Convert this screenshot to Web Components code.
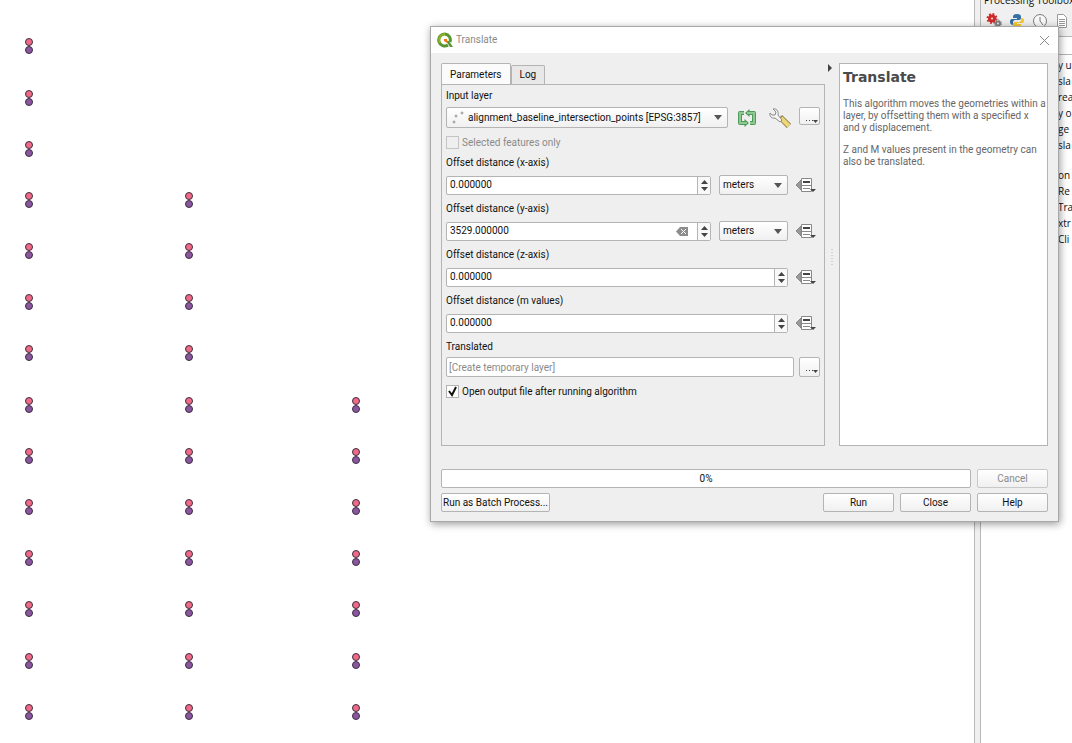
<!DOCTYPE html>
<html lang="en">
<head>
<meta charset="utf-8">
<title>QGIS</title>
<style>
  html, body { height: 100%; }
  body {
    margin: 0;
    overflow: hidden;
    background: #fff;
    color: #111;
    font: 10px/12px Roboto, "Noto Sans", sans-serif;
  }
</style>
</head>
<body>
<qg-desktop>
  <qg-map slot="map"></qg-map>
  <qg-toolbox slot="dock"></qg-toolbox>
  <qg-dialog slot="window" title-text="Translate">
    <qg-tabs slot="params">
      <qg-layer-row label="Input layer" value="alignment_baseline_intersection_points [EPSG:3857]"></qg-layer-row>
      <qg-check label="Selected features only" disabled></qg-check>
      <qg-spin label="Offset distance (x-axis)" value="0.000000" unit="meters"></qg-spin>
      <qg-spin label="Offset distance (y-axis)" value="3529.000000" unit="meters" clearable></qg-spin>
      <qg-spin label="Offset distance (z-axis)" value="0.000000"></qg-spin>
      <qg-spin label="Offset distance (m values)" value="0.000000"></qg-spin>
      <qg-output label="Translated" hint="[Create temporary layer]"></qg-output>
      <qg-check label="Open output file after running algorithm" checked></qg-check>
    </qg-tabs>
    <qg-help slot="help" heading="Translate">
      <p>This algorithm moves the geometries within a layer, by offsetting them with a specified x and y displacement.</p>
      <p>Z and M values present in the geometry can also be translated.</p>
    </qg-help>
  </qg-dialog>
</qg-desktop>

<script>
const BASE = `
  * { box-sizing: border-box; }
  button, input, select { font: inherit; color: inherit; margin: 0; }
  button, .box {
    border: 1px solid #b4b4b4;
    border-radius: 2px;
  }
  button { background: linear-gradient(#fff, #f0f0f0); padding: 0; }
  input.box { background: #fff; min-width: 0; height: 19px; padding: 0 3px; outline: 0; }
  .icon { border: 0; background: none; display: flex; }
  svg { display: block; }
`;

const COMBO_ARROW = '<svg width="8" height="5" viewBox="0 0 8 5"><path d="M0 0h8L4 5z" fill="#555"/></svg>';

const DEFINED = `
  <svg width="21" height="16" viewBox="0 0 21 16">
    <path d="M5 3v10L0 8z" fill="#999" stroke="#888"/>
    <path d="M5.500 1.500h10v13h-10z" fill="#fff" stroke="#888"/>
    <path d="M7 5h7" stroke="#444" stroke-width="2"/>
    <path d="M5 8.500h11M7 11.500h7" stroke="#888"/>
    <path d="M14 12h6l-3 3z" fill="#444"/>
  </svg>`;

const DOTS_BUTTON = `
  <button class="dots" aria-label="More options">
    <svg width="19" height="18" viewBox="0 0 19 18">
      <path d="M6 12.500h7" stroke="#444" stroke-dasharray="1 2"/>
      <path d="M13 12h5l-2.500 3z" fill="#444"/>
    </svg>
  </button>`;

class QgDesktop extends HTMLElement {
    constructor() {
        super();
        this.attachShadow({ mode: 'open' });
        this.shadowRoot.innerHTML = `
        <style>
          :host { display: grid; grid-template-columns: 1fr 7px 91px; height: 100vh; position: relative; overflow: hidden; }
          .split { background: #f0f0f0; border: solid #b8b8b8; border-width: 0 1px; }
          slot[name=window]::slotted(*) { position: absolute; left: 430px; right: 13px; top: 26px; }
        </style>
        <slot name="map"></slot>
        <div class="split"></div>
        <slot name="dock"></slot>
        <slot name="window"></slot>
        `;
    }
}

// column x, index of the first row that has points
const COLUMNS = [[29, 0], [189, 3], [356, 7]];
const ROWS = [46, 98, 149, 200, 251, 302, 353, 405, 456, 507, 558, 609, 661, 712];

class QgMap extends HTMLElement {
    constructor() {
        super();
        this.attachShadow({ mode: 'open' });
        this.shadowRoot.innerHTML = `
        <style>
          :host { display: block; position: relative; background: #fff; overflow: hidden; }
          svg { position: absolute; margin: -9px 0 0 -5px; }
        </style>
        `;
        COLUMNS.forEach(([x, first]) => {
            ROWS.slice(first).forEach(y => this._addPair(x, y));
        });
    }

    _addPair(x, y) {
        this.shadowRoot.innerHTML += `
        <svg width="10" height="18" viewBox="0 0 10 18" style="left:${x}px;top:${y}px">
          <g stroke="#3c3040"><circle cx="5" cy="5" r="3.500" fill="#f06a88"/><circle cx="5" cy="13" r="3.500" fill="#8b55a0"/></g>
        </svg>`;
    }
}

class QgToolbox extends HTMLElement {
    constructor() {
        super();
        this.attachShadow({ mode: 'open' });
        this.shadowRoot.innerHTML = `
        <style>
          ${BASE}
          :host { display: flex; flex-direction: column; overflow: hidden; white-space: nowrap; background: #fff; font-family: "Open Sans", sans-serif; color: #111; }
          header { background: #f0f0f0; padding: 0 0 7px 3px; }
          h2 { font: inherit; line-height: 14px; margin: -7px 0 6px; }
          nav { display: flex; gap: 7px; padding-left: 2px; }
          input.box { width: 100%; border-radius: 0; border-width: 1px 0; }
          ul { list-style: none; margin: 0; padding: 2px 0 0 77px; }
          li { line-height: 16px; height: 16px; }
          li.group { margin-top: 14px; }
        </style>
        <header>
          <h2>Processing Toolbox</h2>
          <nav>
            <button class="icon" aria-label="Models"><svg width="16" height="16" viewBox="0 0 16 16">
              <circle cx="6" cy="5.500" r="2.500" fill="none" stroke="#cf2a2a" stroke-width="3"/>
              <circle cx="6" cy="5.500" r="4.500" fill="none" stroke="#cf2a2a" stroke-width="2" stroke-dasharray="1.800 1.730"/>
              <circle cx="12" cy="10.500" r="2" fill="none" stroke="#808080" stroke-width="2"/>
              <circle cx="12" cy="10.500" r="3.500" fill="none" stroke="#808080" stroke-dasharray="1.500 1.200"/></svg></button>
            <button class="icon" aria-label="Scripts"><svg width="16" height="16" viewBox="0 0 16 16">
              <path d="M8 1c-3 0-4 1-4 3v1h4v1H3C1 6 1 8 1 9s1 3 3 3V9c0-1 1-2 2-2h4c1 0 2-1 2-2V4c0-2-1-3-4-3z" fill="#3470a5"/>
              <path d="M8 15c3 0 4-1 4-3v-1H8v-1h5c2 0 2-2 2-3s-1-2-2-2h-1v2c0 1-1 2-2 2H6c-1 0-2 1-2 2v2c0 1 1 2 4 2z" fill="#f6c832"/></svg></button>
            <button class="icon" aria-label="History"><svg width="16" height="16" viewBox="0 0 16 16" fill="none" stroke="#7a7a7a">
              <circle cx="8" cy="8" r="6.500" fill="#f8f8f8"/><path d="M8 4v4l3 4"/></svg></button>
            <button class="icon" aria-label="Results"><svg width="16" height="16" viewBox="0 0 16 16" fill="none" stroke="#999">
              <path d="M2.500 1.500h6l3 3v10h-9z" fill="#fff"/><path d="M4 6.500h6M4 8.500h6M4 10.500h6M4 12.500h6"/></svg></button>
          </nav>
        </header>
        <input class="box" aria-label="Search">
        <ul></ul>
        `;
        const list = this.shadowRoot.querySelector('ul');
        const items = ['y u', 'sla', 'rea', 'y o', 'ge', 'sla', 'on', 'Re', 'Tra', 'xtr', 'Cli'];
        items.forEach((text, i) => {
            const li = document.createElement('li');
            li.textContent = text;
            if (i === 6) li.className = 'group';
            list.append(li);
        });
    }
}

class QgDialog extends HTMLElement {
    constructor() {
        super();
        this.attachShadow({ mode: 'open' });
        this.shadowRoot.innerHTML = `
        <style>
          ${BASE}
          :host { display: block; background: #efefef; border: 1px solid #a8a8a8; box-shadow: 1px 2px 8px rgba(0, 0, 0, 0.4); }
          header { display: flex; align-items: center; gap: 3px; height: 26px; padding: 0 8px 0 6px; background: #fff; color: #8a8a8a; }
          h1 { font: inherit; margin: 0; flex: 1; }
          .main { display: grid; grid-template-columns: 384px 14px 1fr; padding: 10px 10px 23px; }
          .grip { display: flex; flex-direction: column; align-items: center; }
          .grip button { margin: 1px 4px 177px 0; }
          footer { display: grid; grid-template-columns: 1fr 71px; gap: 5px 6px; padding: 0 10px 9px; }
          footer button { height: 19px; width: 71px; }
          .progress { background: #fff; text-align: center; line-height: 17px; height: 19px; }
          .actions { display: flex; gap: 6px; }
          .actions .batch { width: auto; padding: 0 1px; margin-right: auto; }
          button:disabled { color: #8a8a8a; border-color: #c8c8c8; }
        </style>
        <header>
          <svg width="16" height="16" viewBox="0 0 16 16">
            <path d="M8 2a6 6 0 1 0 3 11M8 2a6 6 0 0 1 5 8" fill="none" stroke="#589632" stroke-width="3"/>
            <path d="M8 2a6 6 0 0 0-5 9" fill="none" stroke="#93b023" stroke-width="2"/>
            <path d="M9 9h3l4 6h-3z" fill="#589632"/>
            <path d="M7 7h3v1l1 2-1 1-3-2z" fill="#ee7913"/>
          </svg>
          <h1></h1>
          <button class="icon" aria-label="Close window"><svg width="11" height="11" viewBox="0 0 11 11"><path d="M1 1l9 9M10 1l-9 9" stroke="#888"/></svg></button>
        </header>
        <div class="main">
          <slot name="params"></slot>
          <div class="grip">
            <button class="icon" aria-label="Collapse help"><svg width="5" height="8" viewBox="0 0 5 8"><path d="M0 0v8l4-4z" fill="#444"/></svg></button>
            <svg width="2" height="16" viewBox="0 0 2 16"><path d="M1 0v16" stroke="#b4b4b4" stroke-dasharray="1 2"/></svg>
          </div>
          <slot name="help"></slot>
        </div>
        <footer>
          <div class="box progress" role="progressbar" aria-valuenow="0">0%</div>
          <button disabled>Cancel</button>
          <div class="actions">
            <button class="batch">Run as Batch Process...</button>
            <button>Run</button>
            <button>Close</button>
          </div>
          <button>Help</button>
        </footer>
        `;
    }

    connectedCallback() {
        this.shadowRoot.querySelector('h1').textContent = this.getAttribute('title-text');
    }
}

class QgTabs extends HTMLElement {
    constructor() {
        super();
        this.attachShadow({ mode: 'open' });
        this.shadowRoot.innerHTML = `
        <style>
          ${BASE}
          :host { display: flex; flex-direction: column; }
          .tabs { display: flex; align-items: flex-end; }
          .tabs button { height: 19px; padding: 0 8px; border-bottom: 0; border-radius: 2px 2px 0 0; background: #e8e8e8; }
          .tabs button[aria-selected=true] { height: 22px; background: #fbfbfb; margin-bottom: -1px; }
          .pane { flex: 1; border: 1px solid #b4b4b4; padding: 5px 4px 39px; }
        </style>
        <div class="tabs" role="tablist">
          <button role="tab" aria-selected="true">Parameters</button>
          <button role="tab" aria-selected="false">Log</button>
        </div>
        <div class="pane" role="tabpanel"><slot></slot></div>
        `;
    }
}

class QgLayerRow extends HTMLElement {
    constructor() {
        super();
        this.attachShadow({ mode: 'open' });
        this.shadowRoot.innerHTML = `
        <style>
          ${BASE}
          :host { display: block; }
          label { display: block; margin-bottom: 5px; }
          .row { display: flex; align-items: center; }
          .combo { flex: 1; display: grid; align-items: center; margin-right: 9px; }
          .combo > * { grid-area: 1 / 1; }
          .combo svg { pointer-events: none; }
          .combo .points { margin-left: 6px; }
          .combo .arrow { justify-self: end; margin-right: 6px; }
          select { appearance: none; width: 100%; height: 21px; padding: 0 18px 0 21px; background: linear-gradient(#fff, #f0f0f0); }
          .wrench { margin: 0 8px 0 12px; }
          .dots { width: 21px; height: 18px; align-self: flex-start; }
        </style>
        <label for="layer"></label>
        <div class="row">
          <div class="combo">
            <select class="box" id="layer"><option></option></select>
            <svg class="points" width="14" height="14" viewBox="0 0 14 14" fill="#ddd" stroke="#999"><circle cx="2" cy="11" r="1"/><circle cx="4" cy="5" r="1"/><circle cx="10" cy="2" r="1"/></svg>
            <span class="arrow">${COMBO_ARROW}</span>
          </div>
          <button class="icon" aria-label="Iterate over this layer"><svg width="20" height="18" viewBox="0 0 20 18" fill="none">
            <g stroke="#4f9a58" stroke-width="4" stroke-linejoin="round"><path d="M7 4H3v10h5M13 14h4V4h-5"/></g>
            <path d="M7.500 10l4.500 4-4.500 4zM12.500 0v8L8 4z" fill="#4f9a58"/>
            <path d="M7 4H3v10h7M13 14h4V4h-7" stroke="#8fc795" stroke-width="2"/></svg></button>
          <button class="icon wrench" aria-label="Advanced options"><svg width="22" height="20" viewBox="0 0 22 20">
            <path d="M11 9l9 9" stroke="#8f8250" stroke-width="6"/><path d="M12 10l8 8" stroke="#efd777" stroke-width="4"/>
            <path d="M4 1l3 3-1 3-3 0-2-2c-1 3 2 6 5 5l5 4 2-2-4-5c1-4-2-7-5-6z" fill="#f4f4f4" stroke="#8a8a8a"/></svg></button>
          ${DOTS_BUTTON}
        </div>
        `;
    }

    connectedCallback() {
        this.shadowRoot.querySelector('label').textContent = this.getAttribute('label');
        this.shadowRoot.querySelector('option').textContent = this.getAttribute('value');
    }
}

class QgSpin extends HTMLElement {
    constructor() {
        super();
        this.attachShadow({ mode: 'open' });
    }

    connectedCallback() {
        const unit = this.getAttribute('unit');
        this.shadowRoot.innerHTML = `
        <style>
          ${BASE}
          :host { display: block; margin-bottom: 8px; }
          label { display: block; margin-bottom: 6px; }
          .row { display: flex; align-items: center; gap: 8px; height: 20px; }
          .spin { flex: 1; display: flex; align-items: center; height: 19px; background: #fff; }
          .spin input { flex: 1; min-width: 0; border: 0; padding: 0 3px; background: none; outline: 0; }
          .clear { margin-right: 9px; }
          .steps { display: flex; flex-direction: column; align-items: center; justify-content: center; gap: 3px; width: 13px; height: 17px; border-left: 1px solid #b4b4b4; background: #f8f8f8; }
          .unit { display: grid; align-items: center; width: 69px; }
          .unit > * { grid-area: 1 / 1; }
          .unit svg { justify-self: end; margin-right: 6px; pointer-events: none; }
          select { appearance: none; height: 20px; padding: 0 3px; background: linear-gradient(#fff, #f0f0f0); }
          .defined { margin-right: 3px; }
        </style>
        <label for="value">${this.getAttribute('label')}</label>
        <div class="row">
          <div class="spin box">
            <input id="value" value="${this.getAttribute('value')}">
            ${this.hasAttribute('clearable') ? `<button class="icon clear" aria-label="Clear"><svg width="12" height="9" viewBox="0 0 12 9"><path d="M4 0h8v9H4L0 4.500z" fill="#8c8c8c"/><path d="M5 2l5 5M10 2L5 7" stroke="#fff"/></svg></button>` : ''}
            <span class="steps">
              <button class="icon" aria-label="Step up"><svg width="7" height="4" viewBox="0 0 7 4"><path d="M0 4h7L3.500 0z" fill="#444"/></svg></button>
              <button class="icon" aria-label="Step down"><svg width="7" height="4" viewBox="0 0 7 4"><path d="M0 0h7L3.500 4z" fill="#444"/></svg></button>
            </span>
          </div>
          ${unit ? `<div class="unit"><select class="box" aria-label="Unit"><option>${unit}</option></select>${COMBO_ARROW}</div>` : ''}
          <button class="icon defined" aria-label="Data defined override">${DEFINED}</button>
        </div>
        `;
    }
}

class QgOutput extends HTMLElement {
    constructor() {
        super();
        this.attachShadow({ mode: 'open' });
        this.shadowRoot.innerHTML = `
        <style>
          ${BASE}
          :host { display: block; }
          label { display: block; margin-bottom: 4px; }
          .row { display: flex; gap: 5px; }
          .row input { flex: 1; height: 20px; padding: 0 2px; }
          ::placeholder { color: #8a8a8a; opacity: 1; }
          .dots { width: 21px; height: 20px; }
        </style>
        <label for="target"></label>
        <div class="row"><input class="box" id="target">${DOTS_BUTTON}</div>
        `;
    }

    connectedCallback() {
        this.shadowRoot.querySelector('label').textContent = this.getAttribute('label');
        this.shadowRoot.querySelector('input').placeholder = this.getAttribute('hint');
    }
}

class QgCheck extends HTMLElement {
    constructor() {
        super();
        this.attachShadow({ mode: 'open' });
        this.shadowRoot.innerHTML = `
        <style>
          ${BASE}
          :host { display: block; padding: 8px 0; }
          :host([disabled]) { color: #8a8a8a; }
          label { display: flex; align-items: center; gap: 3px; }
          .tick { display: grid; }
          .tick > * { grid-area: 1 / 1; }
          input { appearance: none; width: 13px; height: 13px; background: #fff; border: 1px solid #b4b4b4; }
          input:disabled { background: #efefef; border-color: #c4c4c4; }
          svg { pointer-events: none; visibility: hidden; }
          input:checked + svg { visibility: visible; }
        </style>
        <label>
          <span class="tick"><input type="checkbox"><svg width="13" height="13" viewBox="0 0 13 13"><path d="M3 6l3 4 4-8" fill="none" stroke="#111" stroke-width="2"/></svg></span>
          <span id="text"></span>
        </label>
        `;
    }

    connectedCallback() {
        const input = this.shadowRoot.querySelector('input');
        input.checked = this.hasAttribute('checked');
        input.disabled = this.hasAttribute('disabled');
        this.shadowRoot.getElementById('text').textContent = this.getAttribute('label');
    }
}

class QgHelp extends HTMLElement {
    constructor() {
        super();
        this.attachShadow({ mode: 'open' });
        this.shadowRoot.innerHTML = `
        <style>
          :host { display: block; background: #fff; border: 1px solid #b4b4b4; padding: 4px 0 4px 3px; color: #666; }
          h2 { margin: 0 0 12px; font: bold 14px/18px "DejaVu Sans", sans-serif; color: #4a4a4a; }
          ::slotted(p) { margin: 0 0 10px; }
        </style>
        <h2></h2>
        <slot></slot>
        `;
    }

    connectedCallback() {
        this.shadowRoot.querySelector('h2').textContent = this.getAttribute('heading');
    }
}

customElements.define('qg-desktop', QgDesktop);
customElements.define('qg-map', QgMap);
customElements.define('qg-toolbox', QgToolbox);
customElements.define('qg-dialog', QgDialog);
customElements.define('qg-tabs', QgTabs);
customElements.define('qg-layer-row', QgLayerRow);
customElements.define('qg-spin', QgSpin);
customElements.define('qg-output', QgOutput);
customElements.define('qg-check', QgCheck);
customElements.define('qg-help', QgHelp);
</script>
</body>
</html>
